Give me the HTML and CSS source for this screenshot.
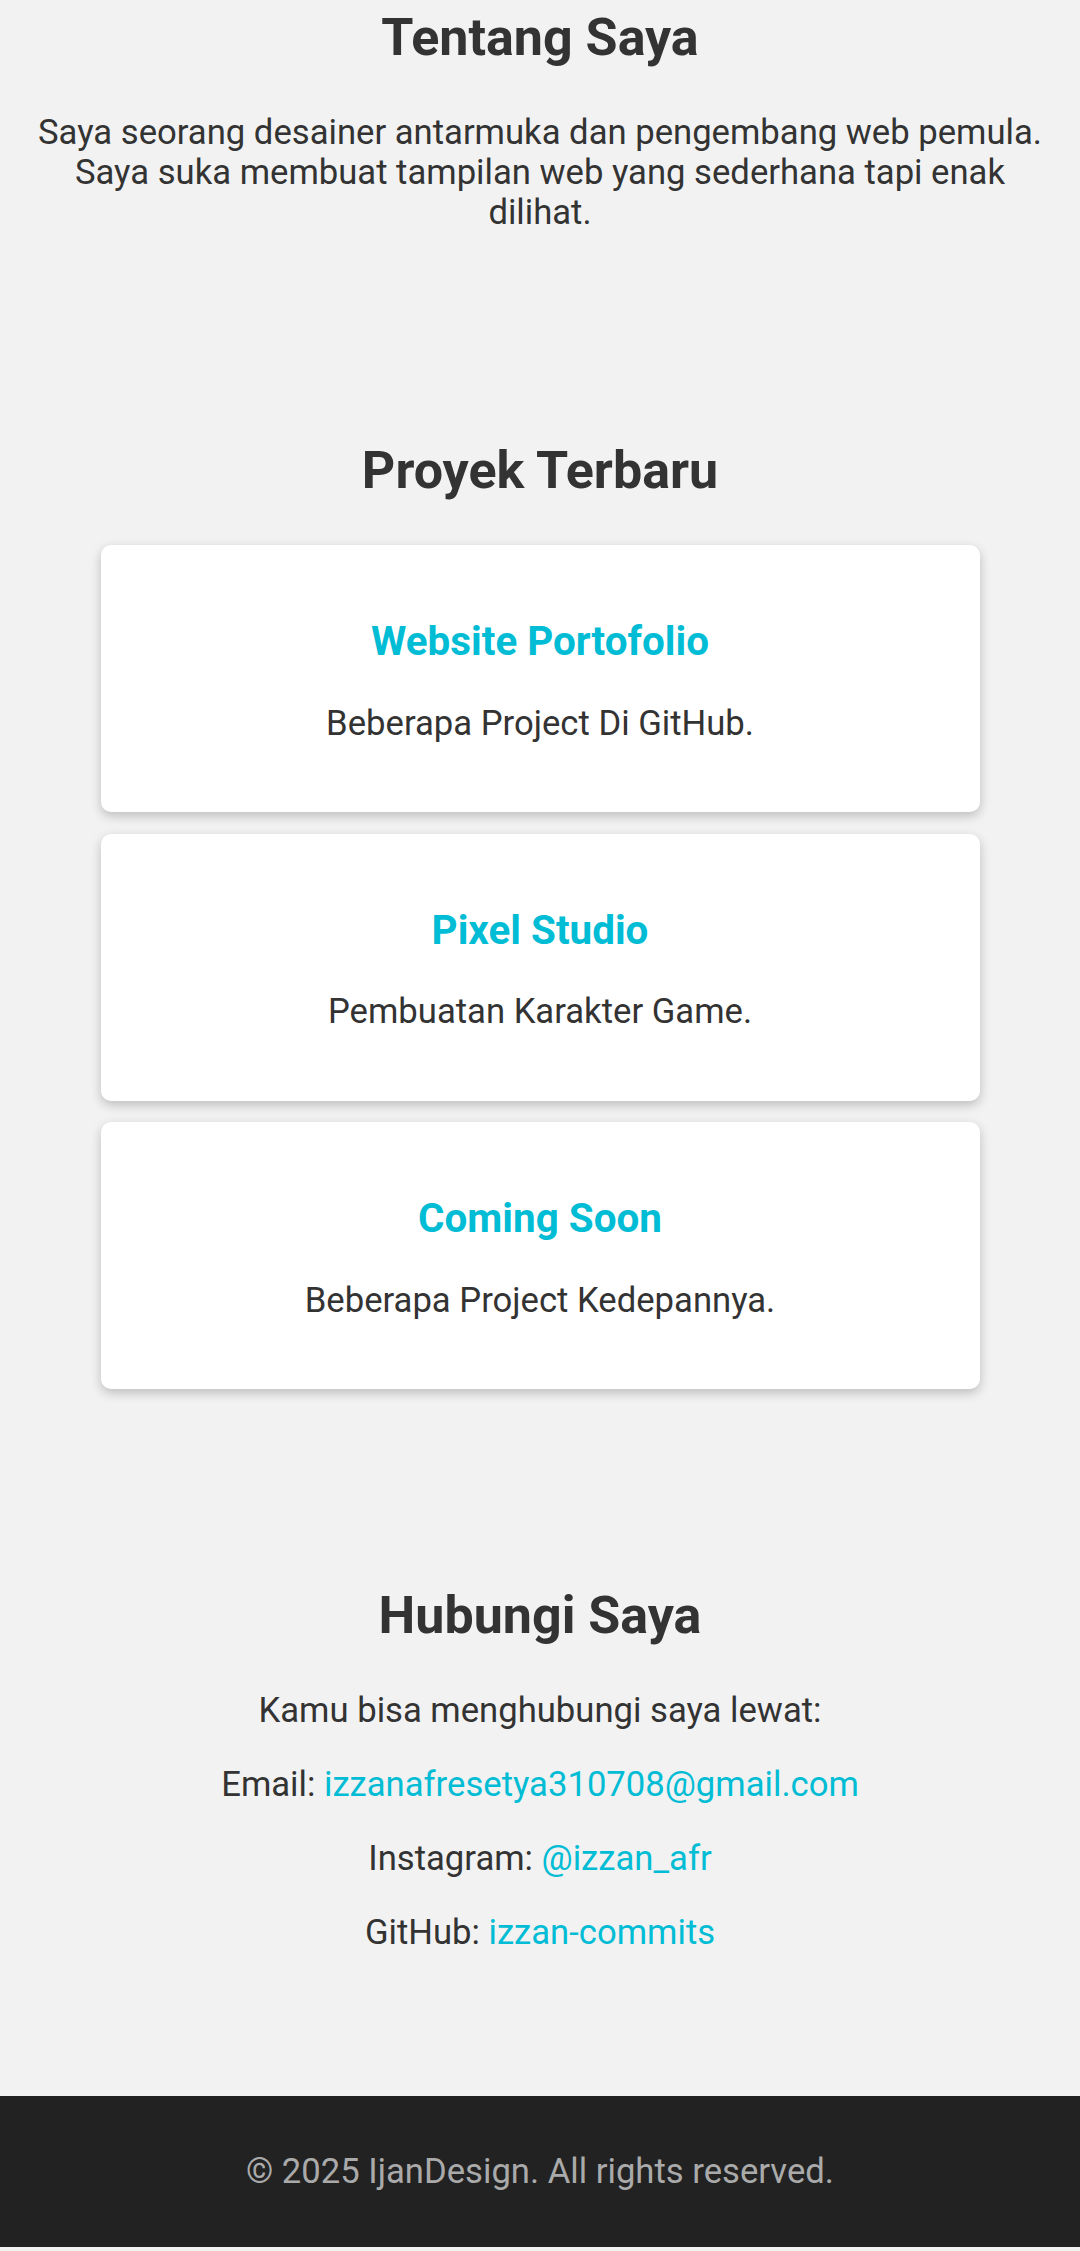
FILE: index.html
```html
<!DOCTYPE html>
<html lang="id">
<head>
<meta charset="utf-8">
<title>IjanDesign</title>
<link rel="stylesheet" href="styles.css">
</head>
<body>
  <section class="section section-first">
    <h2 class="section-title">Tentang Saya</h2>
    <p class="text">Saya seorang desainer antarmuka dan pengembang web pemula. Saya suka membuat tampilan web yang sederhana tapi enak dilihat.</p>
  </section>

  <section class="section">
    <h2 class="section-title">Proyek Terbaru</h2>
    <div class="project-list">
      <div class="card">
        <h3 class="card-title">Website Portofolio</h3>
        <p class="text">Beberapa Project Di GitHub.</p>
      </div>
      <div class="card">
        <h3 class="card-title">Pixel Studio</h3>
        <p class="text">Pembuatan Karakter Game.</p>
      </div>
      <div class="card">
        <h3 class="card-title">Coming Soon</h3>
        <p class="text">Beberapa Project Kedepannya.</p>
      </div>
    </div>
  </section>

  <section class="section">
    <h2 class="section-title">Hubungi Saya</h2>
    <p class="text">Kamu bisa menghubungi saya lewat:</p>
    <p class="text">Email: <a class="link" href="#">izzanafresetya310708@gmail.com</a></p>
    <p class="text">Instagram: <a class="link" href="#">@izzan_afr</a></p>
    <p class="text">GitHub: <a class="link" href="#">izzan-commits</a></p>
  </section>

  <footer class="footer">
    <p class="footer-text">© 2025 IjanDesign. All rights reserved.</p>
  </footer>
</body>
</html>
```

FILE: styles.css
```css
* {
  box-sizing: border-box;
}

html, body {
  margin: 0;
  padding: 0;
}

body {
  background: #f2f2f2;
  color: #333333;
  font-family: Roboto, "Noto Sans", "Liberation Sans", sans-serif;
  font-size: 34.65px;
  text-align: center;
}

.section {
  padding: 65px 30px;
}

.section-first {
  padding-top: 0;
}

.section-first .section-title {
  margin-top: 6.7px;
}

.section-title {
  font-size: 52px;
  font-weight: 700;
  line-height: normal;
  margin: 44px 0;
  color: #333333;
}

.text {
  font-size: 34.65px;
  line-height: 40.2px;
  margin: 34px 0;
}

.project-list {
  width: 879px;
  margin: 0 auto;
}

.card {
  background: #ffffff;
  border-radius: 10px;
  box-shadow: 0 4px 11px rgba(0, 0, 0, 0.22);
  padding: 32.5px 32.5px 35.5px;
  margin-bottom: 21.5px;
}

.card-title {
  font-size: 40.4px;
  font-weight: 700;
  line-height: normal;
  color: #00bcd4;
  margin: 40.4px 0 37.4px;
}

.link {
  color: #00bcd4;
  text-decoration: none;
}

.footer {
  background: #222222;
  color: #aaaaaa;
  margin-top: 44.5px;
  padding: 55px 30px 56px;
}

.footer-text {
  font-size: 34.65px;
  line-height: 40.2px;
  margin: 0;
}
```
